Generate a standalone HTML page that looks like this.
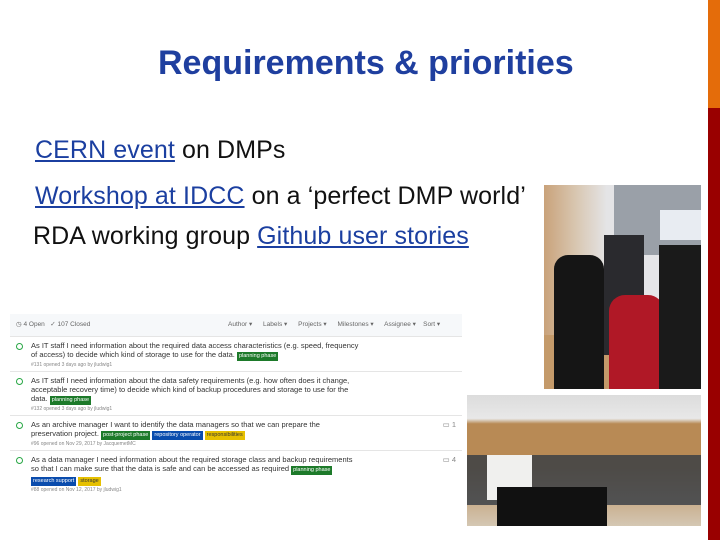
<!DOCTYPE html>
<html><head><meta charset="utf-8"><style>
body{margin:0;width:720px;height:540px;background:#fff;position:relative;overflow:hidden;font-family:"Liberation Sans",sans-serif}
.bar1{position:absolute;left:708px;top:0;width:12px;height:108px;background:#e46c0a}
.bar2{position:absolute;left:708px;top:108px;width:12px;height:432px;background:#990000}
h1{position:absolute;left:158px;top:44px;margin:0;font-family:"Liberation Sans",sans-serif;font-weight:bold;font-size:34px;color:#1f3f9f;letter-spacing:0;white-space:nowrap}
.t{position:absolute;font-size:25px;color:#111;white-space:nowrap;letter-spacing:0.1px}
.t a{color:#1b3fa0;text-decoration:underline}
.gh{position:absolute;left:10px;top:314px;width:452px;height:186px;background:#fff;font-size:7.5px;color:#333}
.hd{height:22px;background:#f6f8fa;color:#666;font-size:6.5px;line-height:22px;padding-left:6px;position:relative}
.row{border-top:1px solid #e5e5e5;position:relative;padding:4px 0 3px 21px}
.row i{position:absolute;left:6px;top:6px;width:5px;height:5px;border:1px solid #28a745;border-radius:50%}
.l{display:inline-block;color:#fff;font-size:5.5px;padding:0 2px;line-height:9px;background:#1d7a2a}
.b{background:#0a4cad}.y{background:#e6c000;color:#333}
.m{font-size:5px;color:#888;margin-top:1px}
.ph{position:absolute;overflow:hidden}
</style></head><body>
<div class="bar1"></div><div class="bar2"></div>
<h1>Requirements &amp; priorities</h1>
<div class="t" style="left:35px;top:136px"><a>CERN event</a> on DMPs</div>
<div class="t" style="left:35px;top:182px"><a>Workshop at IDCC</a> on a ‘perfect DMP world’</div>
<div class="t" style="left:33px;top:222px">RDA working group <a>Github user stories</a></div>

<div class="gh">
<div class="hd">◷ 4 Open &nbsp; ✓ 107 Closed<span style="position:absolute;left:218px">Author ▾ &nbsp;&nbsp;&nbsp;&nbsp; Labels ▾ &nbsp;&nbsp;&nbsp;&nbsp; Projects ▾ &nbsp;&nbsp;&nbsp;&nbsp; Milestones ▾ &nbsp;&nbsp;&nbsp;&nbsp; Assignee ▾ &nbsp;&nbsp; Sort ▾</span></div>
<div class="row"><i></i>As IT staff I need information about the required data access characteristics (e.g. speed, frequency<br>of access) to decide which kind of storage to use for the data. <span class="l">planning phase</span><div class="m">#131 opened 3 days ago by jludwig1</div></div>
<div class="row"><i></i>As IT staff I need information about the data safety requirements (e.g. how often does it change,<br>acceptable recovery time) to decide which kind of backup procedures and storage to use for the<br>data. <span class="l">planning phase</span><div class="m">#132 opened 3 days ago by jludwig1</div></div>
<div class="row"><i></i>As an archive manager I want to identify the data managers so that we can prepare the<br>preservation project. <span class="l">post-project phase</span> <span class="l b">repository operator</span> <span class="l y">responsibilities</span><div class="m">#96 opened on Nov 29, 2017 by JacquemetMC</div><span style="position:absolute;right:6px;top:4px;color:#888">▭ 1</span></div>
<div class="row"><i></i>As a data manager I need information about the required storage class and backup requirements<br>so that I can make sure that the data is safe and can be accessed as required <span class="l">planning phase</span><br><span class="l b">research support</span> <span class="l y">storage</span><div class="m">#88 opened on Nov 12, 2017 by jludwig1</div><span style="position:absolute;right:6px;top:4px;color:#888">▭ 4</span></div>
</div>

<div class="ph" style="left:544px;top:185px;width:157px;height:204px;background:linear-gradient(90deg,#c9a27a 0,#d8c6b0 20%,#e4e4e6 40%,#e6e6ea 100%)">
<div style="position:absolute;left:70px;top:0;width:87px;height:70px;background:#9aa0a8"></div>
<div style="position:absolute;left:116px;top:25px;width:41px;height:30px;background:#e8ecf2"></div>
<div style="position:absolute;left:0;top:150px;width:157px;height:54px;background:#c49a6a"></div>
<div style="position:absolute;left:10px;top:70px;width:50px;height:134px;background:#151515;border-radius:14px 14px 0 0"></div>
<div style="position:absolute;left:60px;top:50px;width:40px;height:120px;background:#2a2a2e"></div>
<div style="position:absolute;left:65px;top:110px;width:55px;height:94px;background:#b01826;border-radius:16px 16px 0 0"></div>
<div style="position:absolute;left:115px;top:60px;width:42px;height:144px;background:#1a1a1a"></div>
</div>
<div class="ph" style="left:467px;top:395px;width:234px;height:131px;background:linear-gradient(180deg,#dcdcdc 0,#e8e8e8 18%,#b88a55 22%,#b88a55 55%,#d4c7b3 100%)">
<div style="position:absolute;left:0;top:60px;width:234px;height:50px;background:#333b44;opacity:.8"></div>
<div style="position:absolute;left:20px;top:60px;width:45px;height:45px;background:#f0f0ee"></div>
<div style="position:absolute;left:30px;top:92px;width:110px;height:39px;background:#111"></div>
</div>
</body></html>
